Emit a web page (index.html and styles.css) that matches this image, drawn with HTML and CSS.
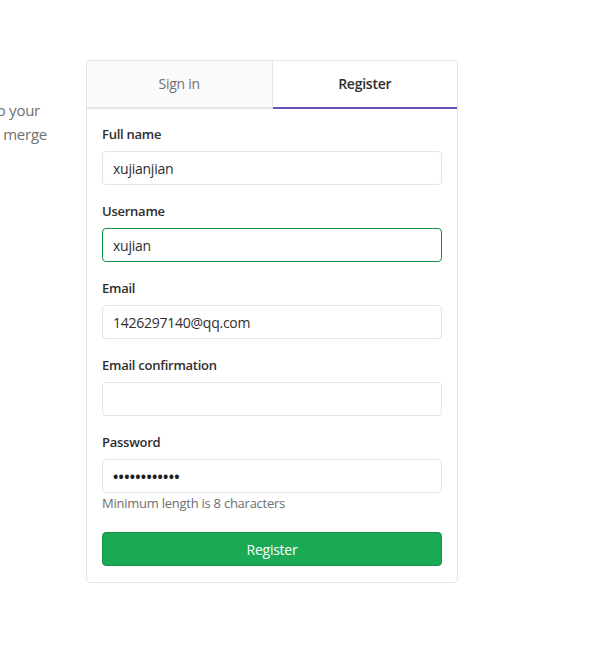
FILE: index.html
```html
<!DOCTYPE html>
<html>
<head>
<meta charset="utf-8">
<link rel="stylesheet" href="styles.css">
</head>
<body>
<div class="page">
  <div class="intro">
    <div class="intro-line l1">Sign in to your</div>
    <div class="intro-line l2">requests and merge</div>
  </div>
  <div class="card">
    <div class="tabs">
      <div class="tab">Sign in</div>
      <div class="tab active">Register</div>
    </div>
    <form class="form">
      <div class="group">
        <label class="label">Full name</label>
        <div class="input">xujianjian</div>
      </div>
      <div class="group">
        <label class="label">Username</label>
        <div class="input valid">xujian</div>
      </div>
      <div class="group">
        <label class="label">Email</label>
        <div class="input">1426297140@qq.com</div>
      </div>
      <div class="group">
        <label class="label">Email confirmation</label>
        <div class="input"></div>
      </div>
      <div class="group last">
        <label class="label">Password</label>
        <div class="input password">••••••••••••</div>
        <p class="help">Minimum length is 8 characters</p>
      </div>
      <div class="btn">Register</div>
    </form>
  </div>
</div>
</body>
</html>
```
FILE: styles.css
```css
html, body {
  margin: 0;
  padding: 0;
  background: #fff;
  overflow: hidden;
}
body {
  font-family: "Open Sans", "Noto Sans", sans-serif;
  color: #2e2e2e;
  letter-spacing: -0.25px;
}
.page {
  display: flex;
  padding-top: 60px;
}
.intro {
  width: 86px;
  flex: none;
  padding-top: 38px;
  display: flex;
  flex-direction: column;
  align-items: flex-end;
  padding-right: 39px;
  box-sizing: border-box;
  font-size: 15px;
  line-height: 24px;
  color: #707070;
}
.intro-line {
  white-space: nowrap;
}
.intro-line.l1 {
  margin-right: 7px;
}
.card {
  width: 372px;
  flex: none;
  border: 1px solid #e5e5e5;
  border-radius: 4px;
  box-sizing: border-box;
  overflow: hidden;
}
.tabs {
  display: flex;
}
.tab {
  flex: 1;
  height: 48px;
  padding-bottom: 2px;
  box-sizing: border-box;
  display: flex;
  align-items: center;
  justify-content: center;
  font-size: 14px;
  color: #707070;
  background: #fafafa;
  border-bottom: 2px solid #e5e5e5;
  border-right: 1px solid #e5e5e5;
}
.tab.active {
  background: #fff;
  color: #2e2e2e;
  font-weight: 600;
  border-right: none;
  border-bottom-color: #6b4fbb;
}
.form {
  padding: 17px 15px 16px 15px;
  margin: 0;
}
.group {
  margin-bottom: 18px;
}
.group.last {
  margin-bottom: 20px;
}
.label {
  display: block;
  font-size: 13px;
  line-height: 17px;
  font-weight: 600;
  margin-bottom: 8px;
  color: #2e2e2e;
}
.input {
  height: 34px;
  box-sizing: border-box;
  border: 1px solid #e5e5e5;
  border-radius: 4px;
  padding: 0 10px;
  display: flex;
  align-items: center;
  font-size: 14px;
  color: #2e2e2e;
}
.input.valid {
  border-color: #168f48;
}
.input.password {
  font-size: 14px;
  letter-spacing: 0.3px;
  color: #1f1f1f;
  font-weight: 700;
}
.help {
  margin: 2px 0 0;
  font-size: 13px;
  line-height: 17px;
  color: #707070;
}
.btn {
  height: 34px;
  box-sizing: border-box;
  border: 1px solid #168f48;
  border-radius: 4px;
  background: #1aaa55;
  color: #fff;
  font-size: 14px;
  display: flex;
  align-items: center;
  justify-content: center;
}
```
